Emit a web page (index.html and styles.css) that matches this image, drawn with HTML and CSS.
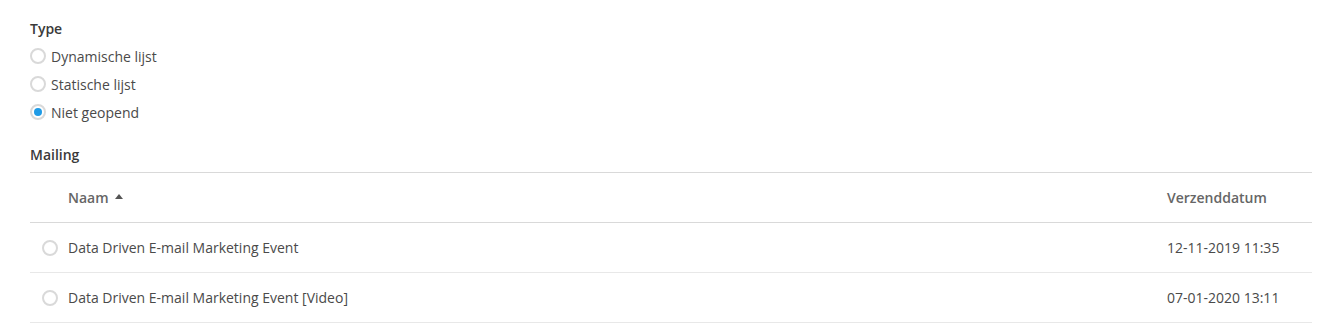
FILE: index.html
```html
<!DOCTYPE html>
<html>
<head>
<meta charset="utf-8">
<link rel="stylesheet" href="styles.css">
</head>
<body>
<div class="page">
  <div class="field">
    <div class="label">Type</div>
    <div class="radios">
      <label class="radio"><span class="circle"></span><span>Dynamische lijst</span></label>
      <label class="radio"><span class="circle"></span><span>Statische lijst</span></label>
      <label class="radio"><span class="circle checked"></span><span>Niet geopend</span></label>
    </div>
  </div>
  <div class="field mailing">
    <div class="label">Mailing</div>
    <div class="table">
      <div class="row head">
        <div class="cell sel"></div>
        <div class="cell name">Naam <span class="caret"></span></div>
        <div class="cell date">Verzenddatum</div>
      </div>
      <div class="row">
        <div class="cell sel"><span class="circle"></span></div>
        <div class="cell name">Data Driven E-mail Marketing Event</div>
        <div class="cell date">12-11-2019 11:35</div>
      </div>
      <div class="row">
        <div class="cell sel"><span class="circle"></span></div>
        <div class="cell name">Data Driven E-mail Marketing Event [Video]</div>
        <div class="cell date">07-01-2020 13:11</div>
      </div>
    </div>
  </div>
</div>
</body>
</html>
```

FILE: styles.css
```css
html, body {
  margin: 0;
  padding: 0;
  background: #fff;
}
body {
  font-family: "Open Sans", "Noto Sans", sans-serif;
  font-size: 14px;
  color: #4a4a4a;
}
.page {
  padding: 19px 12px 0 30px;
}
.label {
  font-weight: 600;
  color: #3a3a3a;
  line-height: 20px;
}
.radios {
  display: flex;
  flex-direction: column;
  padding-top: 3px;
}
.radio {
  display: flex;
  align-items: center;
  gap: 5px;
  height: 28px;
  color: #4a4a4a;
}
.circle {
  box-sizing: border-box;
  display: inline-block;
  width: 16px;
  height: 16px;
  border: 2px solid #d9d9d9;
  border-radius: 50%;
  background: #fff;
  position: relative;
  flex: none;
}
.circle.checked::after {
  content: "";
  position: absolute;
  left: 2px;
  top: 2px;
  width: 8px;
  height: 8px;
  border-radius: 50%;
  background: #1f9be6;
}
.mailing {
  margin-top: 19px;
}
.mailing .label {
  padding-bottom: 7px;
}
.table {
  border-top: 1px solid #d9d9d9;
}
.row {
  display: flex;
  align-items: center;
  height: 49px;
  border-bottom: 1px solid #e8e8e8;
}
.row.head {
  border-bottom-color: #d9d9d9;
}
.head .cell {
  font-weight: 600;
  color: #666;
}
.cell.sel {
  width: 38px;
  flex: none;
  display: flex;
  justify-content: flex-end;
  padding-right: 10px;
  box-sizing: border-box;
}
.cell.name {
  flex: 1;
  display: flex;
  align-items: center;
  gap: 6px;
}
.cell.date {
  width: 145px;
  flex: none;
}
.caret {
  display: inline-block;
  width: 0;
  height: 0;
  border-left: 4px solid transparent;
  border-right: 4px solid transparent;
  border-bottom: 5px solid #555;
  margin-top: -3px;
}
```
